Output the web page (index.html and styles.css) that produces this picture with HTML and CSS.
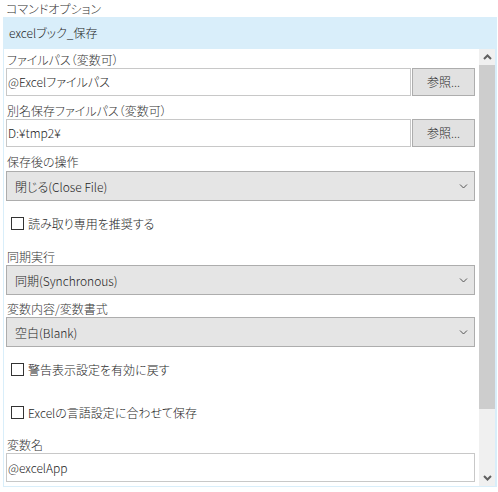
FILE: index.html
```html
<!DOCTYPE html>
<html lang="ja">
<head>
<meta charset="utf-8">
<link rel="stylesheet" href="styles.css">
</head>
<body>
<div class="title">コマンドオプション</div>
<div class="panel">
  <div class="band">excelブック_保存</div>
  <div class="body">
    <div class="content">
      <div class="label l1">ファイルパス（変数可）</div>
      <div class="row">
        <div class="input">@Excelファイルパス</div>
        <div class="btn">参照...</div>
      </div>
      <div class="label l2">別名保存ファイルパス（変数可）</div>
      <div class="row">
        <div class="input">D:¥tmp2¥</div>
        <div class="btn">参照...</div>
      </div>
      <div class="label l3">保存後の操作</div>
      <div class="select">
        <span>閉じる(Close File)</span>
        <svg class="chev" width="9" height="6" viewBox="0 0 9 6"><path d="M1 1.5 L4.5 5 L8 1.5" fill="none" stroke="#555" stroke-width="1"/></svg>
      </div>
      <div class="check c1"><span class="box"></span>読み取り専用を推奨する</div>
      <div class="label l4">同期実行</div>
      <div class="select">
        <span>同期(Synchronous)</span>
        <svg class="chev" width="9" height="6" viewBox="0 0 9 6"><path d="M1 1.5 L4.5 5 L8 1.5" fill="none" stroke="#555" stroke-width="1"/></svg>
      </div>
      <div class="label l5">変数内容/変数書式</div>
      <div class="select">
        <span>空白(Blank)</span>
        <svg class="chev" width="9" height="6" viewBox="0 0 9 6"><path d="M1 1.5 L4.5 5 L8 1.5" fill="none" stroke="#555" stroke-width="1"/></svg>
      </div>
      <div class="check c2"><span class="box"></span>警告表示設定を有効に戻す</div>
      <div class="check c3"><span class="box"></span>Excelの言語設定に合わせて保存</div>
      <div class="label l6">変数名</div>
      <div class="input last">@excelApp</div>
    </div>
    <div class="scrollbar">
      <div class="arrow up"><svg width="9" height="6" viewBox="0 0 9 6"><path d="M1 5 L4.5 1.5 L8 5" fill="none" stroke="#606060" stroke-width="2"/></svg></div>
      <div class="thumb"></div>
      <div class="track"></div>
      <div class="arrow down"><svg width="9" height="6" viewBox="0 0 9 6"><path d="M1 1 L4.5 4.5 L8 1" fill="none" stroke="#606060" stroke-width="2"/></svg></div>
    </div>
  </div>
</div>
</body>
</html>
```
FILE: styles.css
```css
html, body {
  margin: 0;
  padding: 0;
  background: #ffffff;
}
body {
  width: 498px;
  height: 492px;
  font-family: "Noto Sans CJK JP", "Noto Sans", sans-serif;
  font-feature-settings: "palt";
  font-size: 12px;
  font-weight: 300;
  color: #1e1e1e;
  overflow: hidden;
}
.title {
  height: 17px;
  line-height: 17px;
  padding-left: 6px;
  color: #333333;
}
.panel {
  margin-left: 3px;
  width: 491px;
  border-left: 1px solid #d9eefa;
  border-right: 2px solid #d9eefa;
  border-bottom: 1px solid #d9eefa;
  height: 469px;
}
.band {
  height: 32px;
  line-height: 32px;
  background: #d9eefa;
  padding-left: 6px;
  margin-left: -1px;
  margin-right: -2px;
  color: #1e1e1e;
}
.body {
  display: flex;
  height: 437px;
}
.content {
  flex: 1;
  padding-left: 2px;
  display: flex;
  flex-direction: column;
  align-items: flex-start;
}
.label {
  height: 17px;
  line-height: 17px;
  padding-left: 1px;
  color: #333333;
}
.l1 { margin-top: 2px; }
.l2 { margin-top: 6px; }
.l3 { margin-top: 6px; margin-bottom: 1px; }
.l4 { margin-top: 16px; }
.l5 { margin-top: 5px; }
.l6 { margin-top: 15px; }
.row {
  display: flex;
  gap: 1px;
  height: 28px;
}
.input {
  box-sizing: border-box;
  width: 405px;
  height: 28px;
  border: 1px solid #c8c8c8;
  background: #ffffff;
  line-height: 26px;
  padding-left: 1px;
}
.input.last {
  width: 469px;
  height: 29px;
  line-height: 27px;
}
.btn {
  box-sizing: border-box;
  width: 63px;
  height: 28px;
  border: 1px solid #adadad;
  background: #e1e1e1;
  line-height: 26px;
  text-align: center;
}
.select {
  box-sizing: border-box;
  width: 469px;
  height: 30px;
  border: 1px solid #adadad;
  background: #e5e5e5;
  display: flex;
  align-items: center;
  justify-content: space-between;
  padding-left: 8px;
  padding-right: 6px;
}
.chev { display: block; }
.check {
  height: 17px;
  line-height: 17px;
  display: flex;
  align-items: center;
  padding-left: 5px;
}
.c1 { margin-top: 14px; }
.c2 { margin-top: 14px; }
.c3 { margin-top: 26px; }
.box {
  box-sizing: border-box;
  width: 13px;
  height: 13px;
  border: 1px solid #333333;
  background: #ffffff;
  margin-right: 4px;
}
.scrollbar {
  width: 16px;
  background: #f0f0f0;
  display: flex;
  flex-direction: column;
}
.arrow {
  height: 16px;
  display: flex;
  align-items: center;
  justify-content: center;
}
.thumb {
  height: 344px;
  background: #cdcdcd;
}
.track { flex: 1; }
```
